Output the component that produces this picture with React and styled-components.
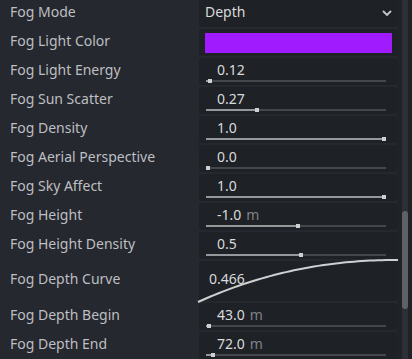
import React from "react";
import styled, { createGlobalStyle } from "styled-components";

const Global = createGlobalStyle`
  html, body { margin: 0; padding: 0; background: #25282e; }
  body { width: 412px; height: 359px; overflow: hidden; font-family: "Noto Sans", "DejaVu Sans", sans-serif; }
`;

const Panel = styled.div`
  display: flex;
  width: 412px;
  height: 359px;
  overflow: hidden;
  background: #25282e;
`;

const List = styled.div`
  display: flex;
  flex-direction: column;
  width: 397px;
  flex: none;
`;

const Row = styled.div`
  display: grid;
  grid-template-columns: 199px 198px;
  height: ${(p) => p.$h || 27}px;
  margin-bottom: 2px;
  flex: none;
`;

const Label = styled.div`
  font-size: 14px;
  line-height: ${(p) => p.$lh || 24}px;
  color: #bdbfc2;
  padding-left: 10px;
  white-space: nowrap;
`;

const Cell = styled.div`
  position: relative;
  background: #1e2126;
  border-radius: 3px;
  box-sizing: border-box;
  padding-left: ${(p) => p.$pl ?? 18}px;
  font-size: 14px;
  line-height: 24px;
  color: #d9dadb;
  white-space: nowrap;
`;

const Unit = styled.span`
  color: #808286;
  margin-left: 5px;
`;

const DropCell = styled(Cell)`
  display: flex;
  justify-content: space-between;
  padding-right: 5px;
`;

const Chevron = styled.svg`
  margin-top: 10px;
  width: 10px;
  height: 6px;
`;

const Swatch = styled.div`
  margin: 4px 5px 0 6px;
  height: 20px;
  background: ${(p) => p.$color};
`;

const Track = styled.div`
  position: absolute;
  left: 7px;
  width: 180px;
  top: 22px;
  height: 2px;
  background: #45474c;
`;

const Fill = styled.div`
  height: 2px;
  background: #96989b;
`;

const Grabber = styled.div`
  position: absolute;
  top: -1px;
  width: 4px;
  height: 4px;
  background: #cfd0d1;
`;

const CurveCell = styled(Cell)`
  overflow: visible;
  padding-left: 10px;
  line-height: 35px;
`;

const CurveSvg = styled.svg`
  position: absolute;
  left: -1px;
  top: 0;
  overflow: visible;
`;

const Scroll = styled.div`
  flex: none;
  width: 15px;
  height: 359px;
  display: flex;
  justify-content: center;
  background: #1f2227;
  box-sizing: border-box;
  padding-left: 1px;
`;

const ScrollTrack = styled.div`
  width: 6px;
  height: 100%;
  background: #2c2f35;
  position: relative;
`;

const ScrollThumb = styled.div`
  position: absolute;
  left: 0;
  width: 6px;
  top: 211px;
  height: 98px;
  border-radius: 3px;
  background: #5e6166;
`;

function Slider({ value, text, unit }) {
  const px = Math.round(value * 180);
  return (
    <Cell>
      {text}
      {unit && <Unit>{unit}</Unit>}
      <Track>
        <Fill style={{ width: px }} />
        <Grabber style={{ left: Math.min(px, 176) }} />
      </Track>
    </Cell>
  );
}

const sliders = [
  ["Fog Light Energy", "0.12", 0.01],
  ["Fog Sun Scatter", "0.27", 0.27],
  ["Fog Density", "1.0", 1],
  ["Fog Aerial Perspective", "0.0", 0],
  ["Fog Sky Affect", "1.0", 1],
  ["Fog Height", "-1.0", 0.5, "m"],
  ["Fog Height Density", "0.5", 0.516],
];

function curvePath() {
  const pts = [];
  for (let i = 0; i <= 50; i++) {
    const t = i / 50;
    const e = 1 - Math.pow(1 - t, 2.146);
    pts.push(`${(t * 200).toFixed(2)},${(41 - 42 * e).toFixed(2)}`);
  }
  return "M" + pts.join(" L");
}

export default function App() {
  return (
    <>
      <Global />
      <Panel>
        <List>
          <Row>
            <Label>Fog Mode</Label>
            <DropCell $pl={6}>
              <span>Depth</span>
              <Chevron viewBox="0 0 10 6">
                <path d="M1 1 L5 5 L9 1" fill="none" stroke="#c8c9ca" strokeWidth="1.8" />
              </Chevron>
            </DropCell>
          </Row>
          <Row>
            <Label>Fog Light Color</Label>
            <Cell $pl={0}>
              <Swatch $color="#a11bff" />
            </Cell>
          </Row>
          {sliders.map(([l, t, v, u]) => (
            <Row key={l}>
              <Label>{l}</Label>
              <Slider value={v} text={t} unit={u} />
            </Row>
          ))}
          <Row $h={40}>
            <Label $lh={36}>Fog Depth Curve</Label>
            <CurveCell>
              0.466
              <CurveSvg width="200" height="42">
                <path d={curvePath()} fill="none" stroke="#cfd0d2" strokeWidth="2" />
              </CurveSvg>
            </CurveCell>
          </Row>
          <Row>
            <Label>Fog Depth Begin</Label>
            <Slider value={0.008} text="43.0" unit="m" />
          </Row>
          <Row>
            <Label>Fog Depth End</Label>
            <Slider value={0.025} text="72.0" unit="m" />
          </Row>
        </List>
        <Scroll>
          <ScrollTrack>
            <ScrollThumb />
          </ScrollTrack>
        </Scroll>
      </Panel>
    </>
  );
}
